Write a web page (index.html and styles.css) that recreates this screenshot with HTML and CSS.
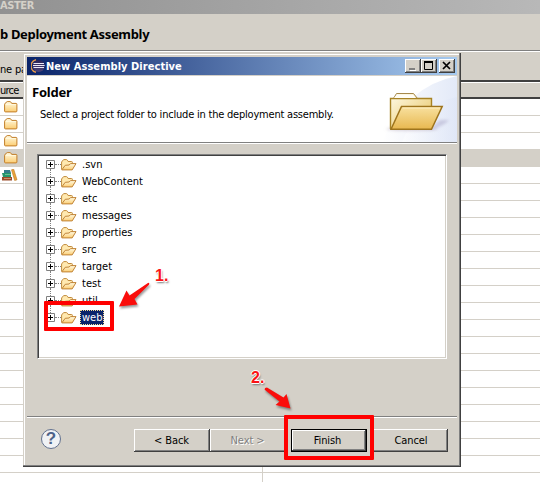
FILE: index.html
```
<!DOCTYPE html>
<html lang="en">
<head>
<meta charset="utf-8">
<title>New Assembly Directive</title>
<link rel="stylesheet" href="styles.css">
</head>
<body>
<svg width="0" height="0" class="defs">
  <defs>
    <linearGradient id="gold" x1="0" y1="0" x2="0" y2="1"><stop offset="0" stop-color="#fffbe4"/><stop offset="1" stop-color="#fccd72"/></linearGradient>
    <linearGradient id="back" x1="0" y1="0" x2="1" y2="1"><stop offset="0" stop-color="#fffbe8"/><stop offset="1" stop-color="#e6c25c"/></linearGradient>
    <linearGradient id="front" x1="0" y1="0" x2="0" y2="1"><stop offset="0" stop-color="#f8e1a0"/><stop offset="1" stop-color="#e8b850"/></linearGradient>
    <linearGradient id="sweep" x1="0" y1="0" x2="1" y2="0"><stop offset="0" stop-color="#fff"/><stop offset="1" stop-color="#dce4f6"/></linearGradient>
    <linearGradient id="eclipse" x1="0" y1="0" x2="0" y2="1"><stop offset="0" stop-color="#2b2457"/><stop offset="1" stop-color="#4a4278"/></linearGradient>
    <filter id="soft" x="-20%" y="-60%" width="140%" height="220%"><feGaussianBlur stdDeviation="1.5"/></filter>
    <symbol id="closed" viewBox="0 0 14 12"><path d="M.6 10V3.3Q.6 2.4 1.4 2.4L2.4 1Q2.7.6 3.2.6H6Q6.5.6 6.8 1L7.7 2.4H12Q12.9 2.4 12.9 3.3V10Q12.9 10.9 12 10.9H1.5Q.6 10.9.6 10Z" fill="url(#gold)" stroke="#c27e28"/><path d="M2 3.5H11.8" stroke="#fff8dc"/></symbol>
    <symbol id="open" viewBox="0 0 16 12"><path d="M.6 10.5V3L2 1.2Q2.4.6 3 .6H5.4Q6 .6 6.4 1.2L7.1 2.5H10.5Q11.4 2.5 11.4 3.4V5" fill="#ffe9b0" stroke="#c18a3c"/><path d="M.8 10.9 4.2 6.3 8.2 6 9.5 4.6H15L11.2 10.9Z" fill="url(#gold)" stroke="#c08336" stroke-linejoin="round"/></symbol>
    <symbol id="plus" viewBox="0 0 9 9"><path d="M.5.5H8.5V8.5H.5Z" fill="#fff" stroke="#808080"/><path d="M2 4.5H7M4.5 2V7" stroke="#000"/></symbol>
  </defs>
</svg>
<main class="screen">
  <div class="parent-title">ASTER</div>
  <h1 class="parent-heading">b Deployment Assembly</h1>
  <div class="parent-label">ne pa</div>
  <div class="table-head">urce</div>
  <div class="rows">
    <div class="row"><svg width="14" height="12"><use href="#closed"/></svg></div>
    <div class="row"><svg width="14" height="12"><use href="#closed"/></svg></div>
    <div class="row"><svg width="14" height="12"><use href="#closed"/></svg></div>
    <div class="row chosen"><svg width="14" height="12"><use href="#closed"/></svg></div>
    <div class="row"><svg class="books" width="16" height="12" viewBox="0 0 16 12"><path d="M2 1H8L9 4H2Z" fill="#347c8b"/><path d="M0 4H9V8H1Z" fill="#23956b"/><path d="M3 5.5H9" stroke="#9bd6b0" stroke-width=".6"/><path d="M0 8H10V11.5H0Z" fill="#9b4a28"/><path d="M2 9.5H9" stroke="#eac19b" stroke-width=".6"/><path d="M9.5.8 11.7.2 15 10.8 12.7 11.5Z" fill="#eba53a" stroke="#bb7620" stroke-width=".6"/></svg></div>
    <div class="row"></div><div class="row"></div><div class="row"></div><div class="row"></div><div class="row"></div><div class="row"></div><div class="row"></div><div class="row"></div><div class="row"></div><div class="row"></div><div class="row"></div><div class="row"></div><div class="row"></div><div class="row"></div><div class="row"></div><div class="row"></div><div class="row"></div><div class="row last"></div>
  </div>

  <section class="dialog">
    <header class="title-bar">
      <svg width="14" height="14" viewBox="0 0 14 14"><path d="M5 .7A6.5 6.5 0 0 0 5 13.3" fill="none" stroke="#e5994a" stroke-width="1.4"/><circle cx="7.7" cy="7" r="6" fill="url(#eclipse)"/><path d="M2.5 4.5H13M2 6.5H13.6M2.5 8.5H13" stroke="#e9e8f6"/></svg>
      <span class="title">New Assembly Directive</span>
      <span class="win"><svg width="16" height="14"><path d="M4 10H10" stroke="#808080" stroke-width="2"/><path d="M5 11.5H11" stroke="#fff"/></svg></span>
      <span class="win"><svg width="16" height="14"><path d="M3.5 3V10.5H11.5V3" fill="none" stroke="#000"/><path d="M3 3H12" stroke="#000" stroke-width="2"/></svg></span>
      <span class="win close"><svg width="16" height="14"><path d="M4 3 11 10M11 3 4 10" stroke="#000" stroke-width="1.7"/></svg></span>
    </header>
    <div class="banner">
      <div class="words"><h2>Folder</h2><p>Select a project folder to include in the deployment assembly.</p></div>
      <svg width="75" height="66" viewBox="0 0 75 66">
        <path d="M0 66Q24 10 75 0V66Z" fill="url(#sweep)" opacity=".8"/><path d="M20 66Q35 28 75 21V66Z" fill="url(#sweep)" opacity=".5"/>
        <g filter="url(#soft)"><ellipse cx="30" cy="53" rx="26" ry="2" fill="#a898ad" opacity=".4"/><path d="M48 53 58 44 67 44Q62 50 48 54Z" fill="#aaa6c8" opacity=".5"/></g>
        <path d="M8.5 53V22.5H11.5L14.5 17.5H31.5L35.5 22.5H49.5V53Z" fill="url(#back)" stroke="#a6894c"/>
        <path d="M8.5 53V22.5H49.5V31" fill="none" stroke="#a78325" stroke-width="1.4"/><path d="M12 22 15 18.5H31L34 22Z" fill="#fffdf5"/>
        <path d="M9 53.2 19.5 30.5H60.2L49.5 53.2Z" fill="url(#front)" stroke="#9e741c" stroke-width="1.5"/><path d="M20.5 32H58" stroke="#fff0c4"/>
      </svg>
    </div>
    <ul class="tree">
      <li><svg class="plus" width="9" height="9"><use href="#plus"/></svg><i></i><svg width="16" height="12"><use href="#open"/></svg><span>.svn</span></li>
      <li><svg class="plus" width="9" height="9"><use href="#plus"/></svg><i></i><svg width="16" height="12"><use href="#open"/></svg><span>WebContent</span></li>
      <li><svg class="plus" width="9" height="9"><use href="#plus"/></svg><i></i><svg width="16" height="12"><use href="#open"/></svg><span>etc</span></li>
      <li><svg class="plus" width="9" height="9"><use href="#plus"/></svg><i></i><svg width="16" height="12"><use href="#open"/></svg><span>messages</span></li>
      <li><svg class="plus" width="9" height="9"><use href="#plus"/></svg><i></i><svg width="16" height="12"><use href="#open"/></svg><span>properties</span></li>
      <li><svg class="plus" width="9" height="9"><use href="#plus"/></svg><i></i><svg width="16" height="12"><use href="#open"/></svg><span>src</span></li>
      <li><svg class="plus" width="9" height="9"><use href="#plus"/></svg><i></i><svg width="16" height="12"><use href="#open"/></svg><span>target</span></li>
      <li><svg class="plus" width="9" height="9"><use href="#plus"/></svg><i></i><svg width="16" height="12"><use href="#open"/></svg><span>test</span></li>
      <li><svg class="plus" width="9" height="9"><use href="#plus"/></svg><i></i><svg width="16" height="12"><use href="#open"/></svg><span>util</span></li>
      <li><svg class="plus" width="9" height="9"><use href="#plus"/></svg><i></i><svg width="16" height="12"><use href="#open"/></svg><span class="picked">web</span></li>
    </ul>
    <footer class="footer">
      <div class="help">?</div>
      <button class="back">&lt; Back</button><button class="next" disabled>Next &gt;</button><button class="finish">Finish</button><button class="cancel">Cancel</button>
    </footer>
  </section>

  <div class="mark mark-web"></div>
  <div class="mark mark-finish"></div>
  <svg class="arrows" width="540" height="482" viewBox="0 0 540 482"><g fill="#fa0d0b"><path d="M119 306.5 126.5 290.5 129.5 295.5 148.3 282.8Q150 283 149 284.8L134.5 299 137.5 304.5Z"/><path d="M290.5 408.5 275.5 405 279.5 401.5 264.7 389.7Q264.5 387.5 267 387.5L283.5 397.5 286.5 394Z"/></g></svg>
  <b class="number one">1.</b>
  <b class="number two">2.</b>
</main>
</body>
</html>
```
FILE: styles.css
```
* { box-sizing: border-box; }
body { margin: 0; font: 11px/13px "DejaVu Sans Condensed", "DejaVu Sans", sans-serif; color: #000; }
svg { display: block; flex: none; }
.defs { position: absolute; }
h1, h2, p, ul { margin: 0; padding: 0; }
.screen { position: relative; width: 540px; height: 482px; overflow: hidden; background: #d4d0c8; white-space: nowrap; }
.parent-title { height: 14px; background: linear-gradient(90deg, #919191, #b8b8b8); color: #d4d0c8; font-weight: bold; line-height: 11px; letter-spacing: -.4px; }
.parent-heading { height: 38px; border-bottom: 1px solid #fff; box-shadow: inset 0 -1px #808080; font-family: "Noto Sans", sans-serif; font-size: 13px; line-height: 41px; letter-spacing: -.33px; }
.parent-label { height: 28px; line-height: 35px; letter-spacing: -.2px; }
.table-head { height: 19px; border-top: 2px solid #404040; border-bottom: 2px solid #404040; box-shadow: inset 0 1px #fff; line-height: 18px; letter-spacing: -.8px; }
.rows { height: 383px; background: linear-gradient(#d4d0c8, #d4d0c8) 262px 0 / 1px 100% no-repeat #fff; }
.row { height: 17px; border-bottom: 1px solid #d4d0c8; padding: 2px 0 0 4px; }
.chosen { background: #d4d0c8; }
.last { border: 0; }
.row .books { margin-left: -2px; }

.dialog { position: absolute; left: 23px; top: 53px; width: 438px; height: 414px; padding: 4px 4px 3px; background: #d4d0c8; border-right: 1px solid #404040; border-bottom: 1px solid #404040; box-shadow: inset -1px -1px #808080, inset 1px 1px #d4d0c8, inset 2px 2px #fff; }
.title-bar { display: flex; align-items: center; width: 430px; height: 18px; padding: 0 2px 0 4px; color: #fff; background: linear-gradient(90deg, #0a246a, #a6caf0); }
.title { flex: 1; padding-left: 1px; font-weight: bold; letter-spacing: .05px; }
.win { width: 16px; height: 14px; background: #d4d0c8; box-shadow: inset -1px -1px #404040, inset 1px 1px #fff, inset -2px -2px #808080; }
.win.close { margin-left: 2px; }
.banner { display: flex; justify-content: space-between; width: 430px; height: 68px; margin-top: 1px; background: #fff; border-bottom: 1px solid #fff; box-shadow: inset 0 -1px #808080; }
.words { padding: 7px 0 0 5px; }
h2 { font: bold 13px/18px "Noto Sans", sans-serif; letter-spacing: -.2px; }
.words p { padding: 7px 0 0 8px; letter-spacing: -.21px; }
.tree { width: 410px; height: 205px; margin: 10px 0 0 10px; padding: 1px 0 0 8px; list-style: none; background: #fff; border: 1px solid; border-color: #808080 #fff #fff #808080; box-shadow: inset 1px 1px #404040, inset -1px -1px #d4d0c8; }
.tree li { position: relative; display: flex; align-items: center; height: 17px; }
.tree li + li::before { content: ""; position: absolute; left: 4px; top: -4px; height: 8px; border-left: 1px dotted #808080; }
.tree i { width: 6px; border-top: 1px dotted #808080; }
.tree span { height: 15px; margin-left: 3px; padding: 1px 2px; }
.tree .picked { color: #fff; background: #0a246a; outline: 1px dotted #f5db95; outline-offset: -1px; }
.footer { display: flex; align-items: flex-start; width: 430px; height: 47px; margin-top: 57px; padding: 12px 9px 0 14px; border-top: 1px solid #808080; box-shadow: inset 0 1px #fff; }
.help { width: 20px; height: 20px; margin-right: 73px; border: 1px solid #62718f; border-radius: 50%; background: #f0f2f5; color: #4d6289; font: bold 17px/18px "Liberation Sans", sans-serif; text-align: center; }
button { width: 76px; height: 23px; padding: 0 1px 0 0; border: 0; font: inherit; letter-spacing: -.1px; color: #000; background: #d4d0c8; box-shadow: inset -1px -1px #404040, inset 1px 1px #fff, inset -2px -2px #808080; }
.next { color: #808080; text-shadow: 1px 1px #fff; }
.finish { margin: 0 5px; padding-right: 3px; border: 1px solid #000; }
.cancel { padding-left: 3px; }

.mark { position: absolute; border: 4px solid #f00; border-radius: 1px; }
.mark-web { left: 44px; top: 301px; width: 70px; height: 30px; }
.mark-finish { left: 284px; top: 415px; width: 90px; height: 45px; }
.arrows { position: absolute; left: 0; top: 0; filter: drop-shadow(1px 2px 1px #0006); }
.number { position: absolute; color: #fa1418; font: bold 16px/16px "Liberation Sans", sans-serif; text-shadow: 1px 0 #fff, -1px 0 #fff, 0 1px #fff, 0 -1px #fff, 1px 2px 2px #777; }
.one { left: 155px; top: 268px; }
.two { left: 251px; top: 370px; }
```
